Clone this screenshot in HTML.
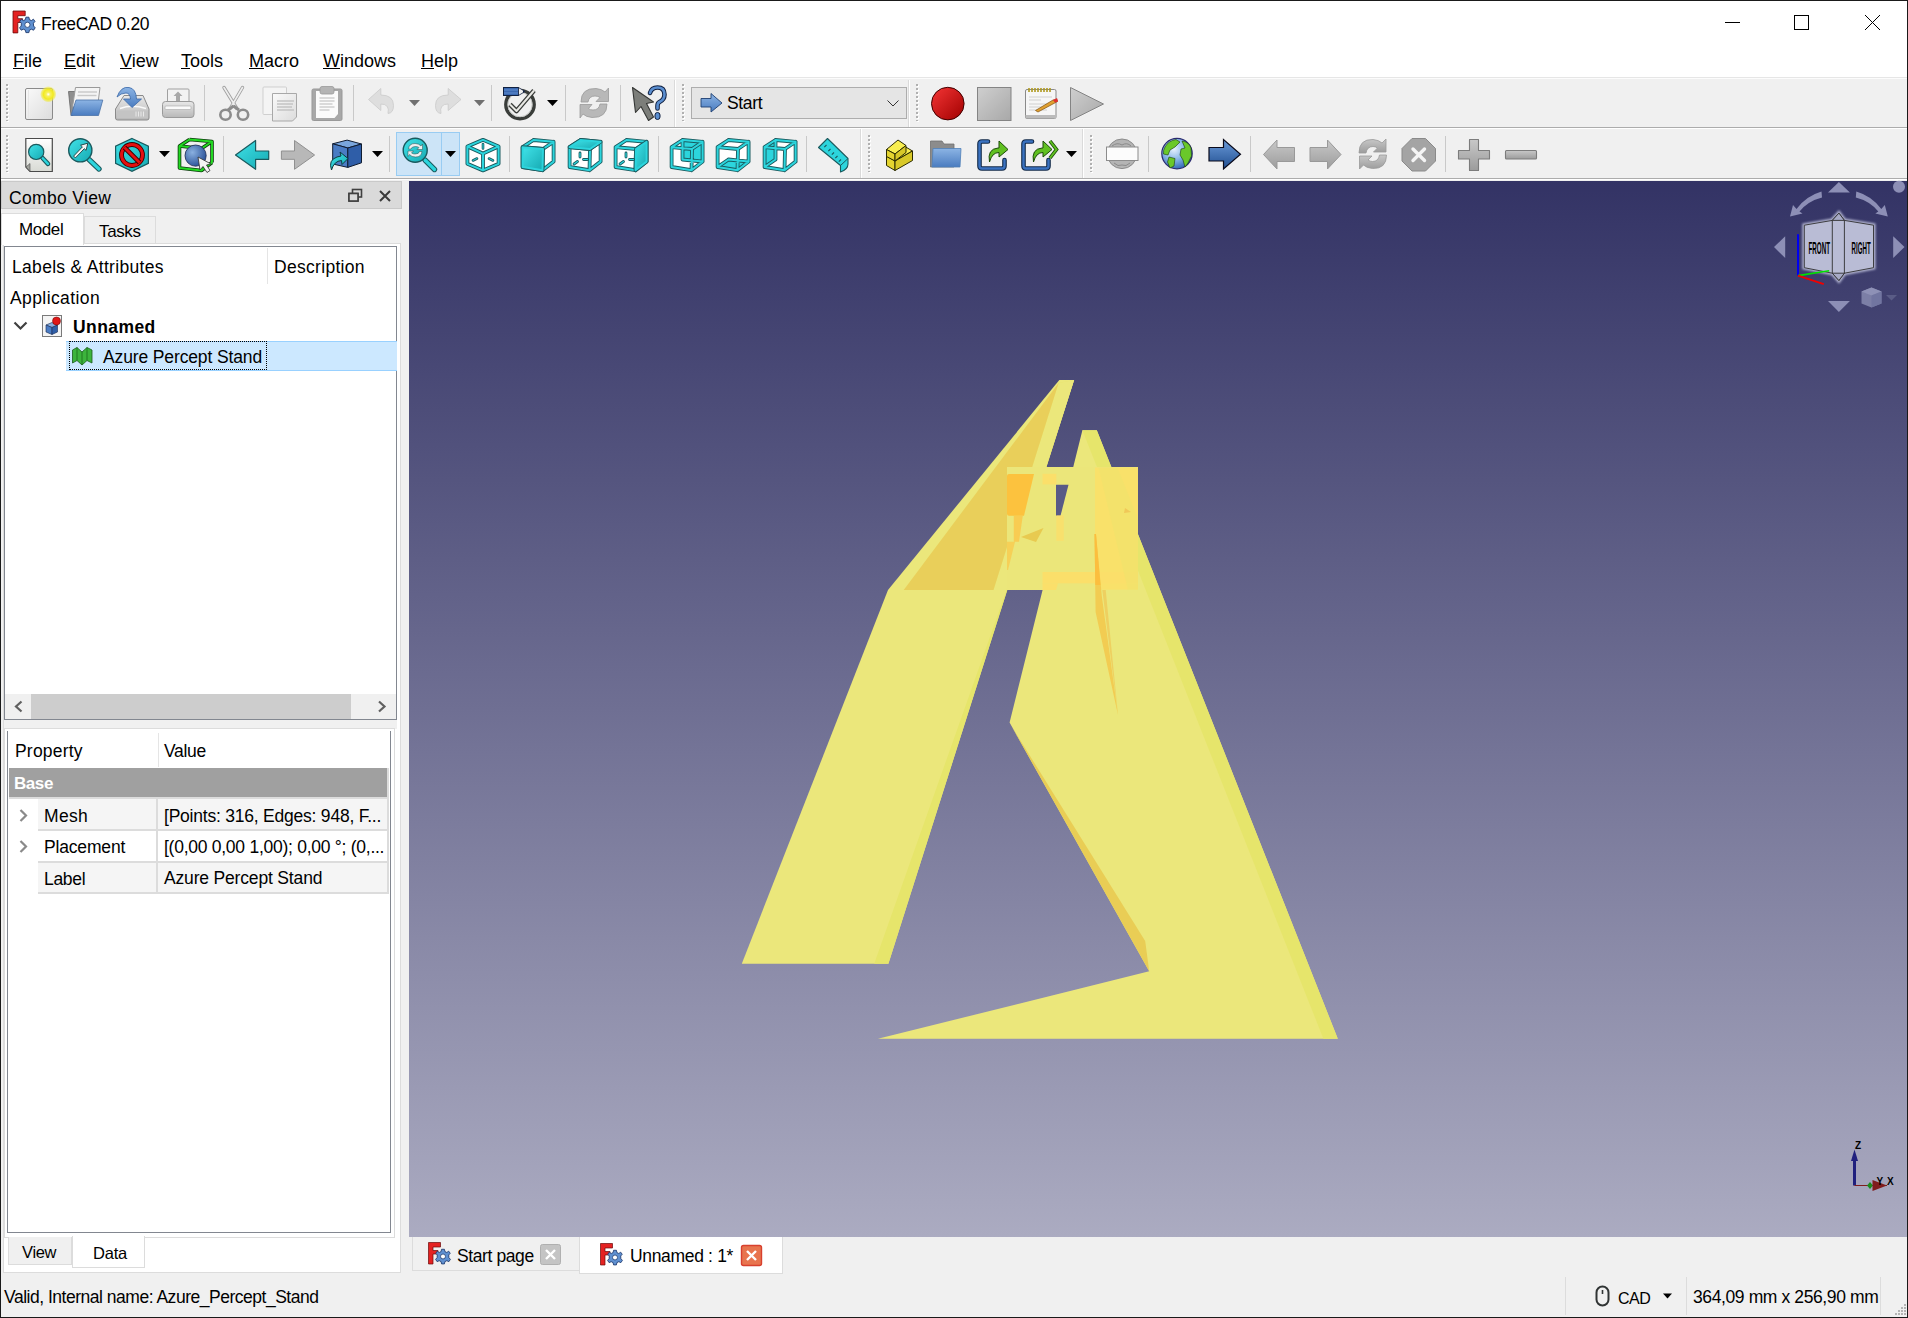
<!DOCTYPE html>
<html><head><meta charset="utf-8">
<style>
*{margin:0;padding:0;box-sizing:border-box}
html,body{width:1908px;height:1318px;overflow:hidden;background:#f0f0f0;font-family:"Liberation Sans",sans-serif;color:#000}
.a{position:absolute}
.t{position:absolute;white-space:nowrap;font-size:17.5px;line-height:20px}
svg{position:absolute;overflow:visible}
.grip{width:2px;background:repeating-linear-gradient(to bottom,#b0b0b0 0,#b0b0b0 2px,transparent 2px,transparent 4px);box-shadow:1px 1px 0 0 rgba(255,255,255,0)}
.gripw{width:2px;background:repeating-linear-gradient(to bottom,#fff 0,#fff 2px,transparent 2px,transparent 4px)}
.sep{width:1px;height:36px;background:#c9c9c9}
</style></head><body>
<!-- window border -->
<div class="a" style="left:0;top:0;width:1908px;height:1318px;background:#f0f0f0"></div>
<!-- title bar -->
<div class="a" style="left:0;top:0;width:1908px;height:77px;background:#fff"></div>
<div class="t" style="left:41px;top:14px;font-size:17.5px;letter-spacing:-0.3px">FreeCAD 0.20</div>
<!-- menu -->
<div class="a" style="left:1px;top:77px;width:1906px;height:1px;background:#e6e6e6"></div>
<div class="a" style="left:1px;top:78px;width:1906px;height:1px;background:#fcfcfc"></div>
<div class="t" style="left:13px;top:51px;font-size:18px"><u>F</u>ile</div>
<div class="t" style="left:64px;top:51px;font-size:18px"><u>E</u>dit</div>
<div class="t" style="left:120px;top:51px;font-size:18px"><u>V</u>iew</div>
<div class="t" style="left:181px;top:51px;font-size:18px"><u>T</u>ools</div>
<div class="t" style="left:249px;top:51px;font-size:18px"><u>M</u>acro</div>
<div class="t" style="left:323px;top:51px;font-size:18px"><u>W</u>indows</div>
<div class="t" style="left:421px;top:51px;font-size:18px"><u>H</u>elp</div>
<!-- toolbar rows -->
<div class="a" style="left:1px;top:79px;width:1906px;height:48px;background:#f0f0f0"></div>
<div class="a" style="left:1px;top:127px;width:1906px;height:1px;background:#acacac"></div>
<div class="a" style="left:1px;top:128px;width:1906px;height:1px;background:#fff"></div>
<div class="a" style="left:1px;top:178px;width:1906px;height:1px;background:#acacac"></div>
<div class="a" style="left:1px;top:179px;width:1906px;height:1px;background:#fff"></div>

<!-- grips -->
<div class="a gripw" style="left:7px;top:85px;height:37px"></div>
<div class="a grip" style="left:6px;top:84px;height:37px"></div>
<div class="a gripw" style="left:683px;top:85px;height:37px"></div>
<div class="a grip" style="left:682px;top:84px;height:37px"></div>
<div class="a gripw" style="left:917px;top:85px;height:37px"></div>
<div class="a grip" style="left:916px;top:84px;height:37px"></div>
<div class="a gripw" style="left:7px;top:136px;height:37px"></div>
<div class="a grip" style="left:6px;top:135px;height:37px"></div>
<div class="a gripw" style="left:869px;top:136px;height:37px"></div>
<div class="a grip" style="left:868px;top:135px;height:37px"></div>
<div class="a gripw" style="left:1091px;top:136px;height:37px"></div>
<div class="a grip" style="left:1090px;top:135px;height:37px"></div>
<!-- toolbar end lines -->
<div class="a" style="left:674px;top:80px;width:1px;height:47px;background:#dadada"></div>
<div class="a" style="left:675px;top:80px;width:1px;height:47px;background:#fff"></div>
<div class="a" style="left:908px;top:80px;width:1px;height:47px;background:#dadada"></div>
<div class="a" style="left:909px;top:80px;width:1px;height:47px;background:#fff"></div>
<div class="a" style="left:860px;top:129px;width:1px;height:49px;background:#dadada"></div>
<div class="a" style="left:861px;top:129px;width:1px;height:49px;background:#fff"></div>
<div class="a" style="left:1082px;top:129px;width:1px;height:49px;background:#dadada"></div>
<div class="a" style="left:1083px;top:129px;width:1px;height:49px;background:#fff"></div>
<!-- separators row1 -->
<div class="a sep" style="left:204px;top:85px"></div>
<div class="a sep" style="left:353px;top:85px"></div>
<div class="a sep" style="left:491px;top:85px"></div>
<div class="a sep" style="left:565px;top:85px"></div>
<div class="a sep" style="left:620px;top:85px"></div>
<!-- separators row2 -->
<div class="a sep" style="left:223px;top:136px"></div>
<div class="a sep" style="left:389px;top:136px"></div>
<div class="a sep" style="left:509px;top:136px"></div>
<div class="a sep" style="left:658px;top:136px"></div>
<div class="a sep" style="left:806px;top:136px"></div>
<div class="a sep" style="left:1148px;top:136px"></div>
<div class="a sep" style="left:1250px;top:136px"></div>
<div class="a sep" style="left:1445px;top:136px"></div>

<svg width="1908" height="180" style="left:0;top:0">
<defs>
<linearGradient id="gpage" x1="0" y1="0" x2="1" y2="1"><stop offset="0" stop-color="#fafafa"/><stop offset="1" stop-color="#dcdcdc"/></linearGradient>
<radialGradient id="gglow"><stop offset="0" stop-color="#fff"/><stop offset="0.25" stop-color="#f8f060"/><stop offset="0.6" stop-color="#f2ea20"/><stop offset="0.85" stop-color="#f0ea40" stop-opacity="0.6"/><stop offset="1" stop-color="#f0ea40" stop-opacity="0"/></radialGradient>
<linearGradient id="gblue" x1="0" y1="0" x2="0" y2="1"><stop offset="0" stop-color="#8cb4e4"/><stop offset="1" stop-color="#4a7cc0"/></linearGradient>
<linearGradient id="ggray" x1="0" y1="0" x2="0" y2="1"><stop offset="0" stop-color="#e8e8e8"/><stop offset="1" stop-color="#b8b8b8"/></linearGradient>
<linearGradient id="gred" x1="0" y1="0" x2="1" y2="1"><stop offset="0" stop-color="#f53535"/><stop offset="1" stop-color="#a00000"/></linearGradient>
<linearGradient id="gstop" x1="0" y1="0" x2="1" y2="1"><stop offset="0" stop-color="#cfcfcf"/><stop offset="1" stop-color="#a8a8a8"/></linearGradient>
</defs>
<!-- New -->
<rect x="25.5" y="88.5" width="27" height="31" rx="1.5" fill="url(#gpage)" stroke="#8a8a8a" stroke-width="1"/>
<line x1="28.5" y1="90" x2="28.5" y2="118" stroke="#e6e6e6"/>
<circle cx="48.3" cy="94.3" r="8.2" fill="url(#gglow)"/>
<!-- Open -->
<path d="M68.5 91.5 L76 91.5 L73 115.5 L71 115.5 Z" fill="#8f8f8f" stroke="#666" stroke-width="0.8"/>
<path d="M75.5 87.5 L100 87.5 L97.5 107 L72.5 107 Z" fill="#f4f4f4" stroke="#9a9a9a" stroke-width="1"/>
<line x1="78" y1="92" x2="97" y2="92" stroke="#c8c8c8" stroke-width="1.4"/>
<line x1="77.5" y1="95.5" x2="96.5" y2="95.5" stroke="#c8c8c8" stroke-width="1.4"/>
<path d="M76 100 L102.8 100 L98.5 115.5 L71 115.5 Z" fill="url(#gblue)" stroke="#4a72a8" stroke-width="0.8"/>
<!-- Save -->
<path d="M124 95.5 L143 95.5 L149 109 L149 118 Q149 120 147 120 L117.5 120 Q115.5 120 115.5 118 L115.5 109 Z" fill="url(#ggray)" stroke="#8a8a8a" stroke-width="1"/>
<path d="M120 108.5 Q132 104 146 108.5" fill="none" stroke="#fafafa" stroke-width="1.5"/>
<rect x="117" y="110.5" width="31" height="7.5" fill="#c4c4c4"/>
<path d="M136 111.5 v5 M138.5 111.5 v5 M141 111.5 v5 M143.5 111.5 v5" stroke="#e8e8e8" stroke-width="1"/>
<path d="M117 97 Q121 86 129 87.5 Q136 88.5 136.5 99 L141.5 99 L132 107.5 L123.5 99 L130.5 99 Q130 93 126 93 Q121 93 117 97 Z" fill="url(#gblue)" stroke="#3a68a8" stroke-width="0.8"/>
<!-- Print -->
<rect x="167.5" y="89" width="21.5" height="15" rx="1" fill="#f2f2f2" stroke="#a0a0a0" stroke-width="1"/>
<path d="M178 91.5 L182.5 96 L180 96 L180 101 L176 101 L176 96 L173.5 96 Z" fill="#a8a8a8"/>
<rect x="162.5" y="101.5" width="31.5" height="16" rx="3" fill="url(#ggray)" stroke="#9a9a9a" stroke-width="1"/>
<rect x="165" y="106" width="26" height="3.5" rx="1" fill="#fafafa" stroke="#a8a8a8" stroke-width="0.6"/>
<!-- Cut -->
<path d="M224 87.5 L236.5 108 M242.5 87.5 L230.5 108" stroke="#a0a0a0" stroke-width="3.4" stroke-linecap="round"/>
<path d="M224 87.5 L236.5 108 M242.5 87.5 L230.5 108" stroke="#eeeeee" stroke-width="1.6" stroke-linecap="round"/>
<path d="M233.5 106 L228 110" stroke="#8c8c8c" stroke-width="3"/>
<path d="M233.5 106 L239 110" stroke="#8c8c8c" stroke-width="3"/>
<ellipse cx="225.5" cy="114.8" rx="5.2" ry="5" fill="none" stroke="#8c8c8c" stroke-width="2.6"/>
<ellipse cx="243" cy="114.8" rx="5.2" ry="5" fill="none" stroke="#8c8c8c" stroke-width="2.6"/>
<!-- Copy -->
<rect x="263" y="87" width="23.5" height="27.5" rx="1" fill="#f4f4f4" stroke="#cfcfcf" stroke-width="1"/>
<path d="M272.5 93.5 L296.5 93.5 L296.5 117 L292.5 121 L272.5 121 Z" fill="url(#gpage)" stroke="#a8a8a8" stroke-width="1"/>
<path d="M277 101 h17 M277 104 h16 M277 107 h15 M277 110 h17" stroke="#c4c4c4" stroke-width="1.3"/>
<!-- Paste -->
<rect x="312" y="89" width="30" height="31.5" rx="1.5" fill="#a8a8a8" stroke="#999" stroke-width="1"/>
<path d="M316 91 L338 91 L338 114 L334.5 118 L316 118 Z" fill="#fbfbfb"/>
<rect x="320" y="86.5" width="14" height="7.5" rx="2" fill="#b4b4b4" stroke="#999" stroke-width="0.8"/>
<path d="M319.5 98 h15 M319.5 101 h15 M319.5 104 h13 M319.5 107 h15 M319.5 110 h10" stroke="#d0d0d0" stroke-width="1.3"/>
<!-- Undo -->
<path d="M368.5 99.5 L380.8 88.5 L380.8 95 Q393.5 95 393.5 105.5 Q393.5 113 388 113.5 Q390 104 380.8 104 L380.8 110.5 Z" fill="#dedede" stroke="#cacaca" stroke-width="0.8"/>
<path d="M409 100 L420 100 L414.5 106 Z" fill="#707070"/>
<!-- Redo -->
<path d="M461 99.5 L448.2 88.5 L448.2 95 Q435.5 95 435.5 105.5 Q435.5 113 441 113.5 Q439 104 448.2 104 L448.2 110.5 Z" fill="#dedede" stroke="#cacaca" stroke-width="0.8"/>
<path d="M474 100 L485 100 L479.5 106 Z" fill="#707070"/>
<!-- Workbench check -->
<circle cx="520" cy="104.6" r="14.2" fill="none" stroke="#3a3d3a" stroke-width="3.4"/>
<circle cx="520" cy="104.6" r="12.2" fill="none" stroke="#b8bab6" stroke-width="0.8"/>
<path d="M510 104.5 L516.5 111 L534 90.5" fill="none" stroke="#3a3d3a" stroke-width="4.6" stroke-linejoin="round"/>
<path d="M510 104.5 L516.5 111 L534 90.5" fill="none" stroke="#e8e8e4" stroke-width="2" stroke-linejoin="round"/>
<rect x="503.5" y="87.5" width="15" height="8" fill="#3a68b0" stroke="#102040" stroke-width="1"/>
<path d="M518.5 87.5 L525 91.5 L518.5 95.5 Z" fill="#f0f0f0" stroke="#102040" stroke-width="0.8"/>
<path d="M523 90.3 L525 91.5 L523 92.7 Z" fill="#102040"/>
<path d="M504 90 h14 M504 93 h14" stroke="#6a98d8" stroke-width="0.8"/>
<path d="M547 100 L558 100 L552.5 106 Z" fill="#000"/>
<!-- Refresh -->
<path d="M581 102 Q581 88 596 88.5 Q602 89 605 92 L608.5 88 L608.5 101.5 L596 101.5 L600 97.5 Q598 96 595 96 Q589 96 588 102 Z" fill="#b8b8b8" stroke="#9a9a9a" stroke-width="0.8"/>
<path d="M607 104 Q607 118 592 117.5 Q586 117 583 114 L580 118 L580 104.5 L592 104.5 L588.5 108.5 Q590 110 593 110 Q599 110 600 104 Z" fill="#b8b8b8" stroke="#9a9a9a" stroke-width="0.8"/>
<!-- Whats this -->
<path d="M632.5 87.5 L635.5 112.5 L641 106.5 L648.5 120.5 L653.5 117 L646.5 103.5 L653.5 102 Z" fill="#7c7e7a" stroke="#343634" stroke-width="1.1" stroke-linejoin="round"/>
<path d="M650 93 Q651.5 87.5 657.5 87.5 Q664.5 87.5 664.5 94.5 Q664.5 99.5 659.5 102 Q657.5 103 657.5 106 L657.5 108.5" fill="none" stroke="#102040" stroke-width="4.6" stroke-linecap="round"/>
<path d="M650 93 Q651.5 87.5 657.5 87.5 Q664.5 87.5 664.5 94.5 Q664.5 99.5 659.5 102 Q657.5 103 657.5 106 L657.5 108.5" fill="none" stroke="#5a8ed0" stroke-width="2.6" stroke-linecap="round"/>
<rect x="655" y="112.5" width="5" height="7" rx="2.5" fill="#5a8ed0" stroke="#102040" stroke-width="1"/>
<!-- combo -->
<rect x="691.5" y="87.5" width="215" height="31" fill="#e5e5e5" stroke="#adadad" stroke-width="1"/>
<path d="M701 98.5 L711 98.5 L711 93.5 L722 103 L711 112 L711 107 L701 107 Z" fill="url(#gblue)" stroke="#1e3e70" stroke-width="0.9"/>
<path d="M887.5 100.5 L893 106 L898.5 100.5" fill="none" stroke="#333" stroke-width="1"/>
<!-- record -->
<circle cx="947.8" cy="103.6" r="16.3" fill="url(#gred)" stroke="#400000" stroke-width="1"/>
<!-- stop -->
<rect x="977.5" y="87.5" width="33.5" height="33" fill="url(#gstop)" stroke="#848484" stroke-width="1"/>
<!-- macro editor -->
<rect x="1025.5" y="89.5" width="30.5" height="29" rx="1.5" fill="#f6f6f6" stroke="#8a8a8a" stroke-width="1"/>
<rect x="1025.5" y="115" width="30.5" height="3.5" fill="#bcbcbc"/>
<path d="M1029 88 v4 M1032 88 v4 M1035 88 v4 M1038 88 v4 M1041 88 v4 M1044 88 v4 M1047 88 v4 M1050 88 v4" stroke="#b09a20" stroke-width="1.6"/>
<path d="M1029 97 h23 M1029 100 h12 M1029 104 h20 M1029 107 h16 M1029 110 h18" stroke="#c8c8c8" stroke-width="0.8"/>
<path d="M1035.5 110.5 L1053 100 L1057 99.5 L1057.5 101.5 L1038 112 Z" fill="#e0a030" stroke="#805010" stroke-width="0.7"/>
<path d="M1053 100 L1057 98 L1058 101.5 L1055 102.5 Z" fill="#e03030"/>
<!-- play -->
<path d="M1070.5 87.5 L1103.5 104 L1070.5 120.5 Z" fill="url(#gstop)" stroke="#848484" stroke-width="1"/>
</svg>
<div class="t" style="left:727px;top:93px;font-size:17.5px;letter-spacing:-0.35px">Start</div>

<!-- R2S -->
<svg width="1908" height="180" style="left:0;top:0">
<defs>
<linearGradient id="gcy" x1="0" y1="0" x2="1" y2="1"><stop offset="0" stop-color="#40e2e8"/><stop offset="1" stop-color="#16aab2"/></linearGradient>
<linearGradient id="gpg2" x1="0" y1="0" x2="0" y2="1"><stop offset="0" stop-color="#fff"/><stop offset="1" stop-color="#d8dad4"/></linearGradient>
<radialGradient id="gsph" cx="0.35" cy="0.35" r="0.7"><stop offset="0" stop-color="#8ab0e0"/><stop offset="1" stop-color="#2a5298"/></radialGradient>
<linearGradient id="gcube" x1="0" y1="0" x2="1" y2="1"><stop offset="0" stop-color="#5a8ad0"/><stop offset="1" stop-color="#2a5aa0"/></linearGradient>
<radialGradient id="gglobe" cx="0.4" cy="0.35" r="0.7"><stop offset="0" stop-color="#e8f2ff"/><stop offset="0.5" stop-color="#8ab8e8"/><stop offset="1" stop-color="#2a62b0"/></radialGradient>
<linearGradient id="gbl2" x1="0" y1="0" x2="0" y2="1"><stop offset="0" stop-color="#6a9ad8"/><stop offset="1" stop-color="#204e90"/></linearGradient>
<linearGradient id="ggr2" x1="0" y1="0" x2="0" y2="1"><stop offset="0" stop-color="#c8c8c8"/><stop offset="1" stop-color="#9c9c9c"/></linearGradient>
</defs>
<path d="M25.8 138.5 L52.3 138.5 L52.3 171.5 L30 171.5 L25.8 167 Z" fill="url(#gpg2)" stroke="#4a4a4a" stroke-width="1.2"/>
<path d="M26 167 L30 163.5 L30 171.5 Z" fill="#a0a29c" stroke="#4a4a4a" stroke-width="0.6"/>
<line x1="42.5" y1="158" x2="48" y2="163.8" stroke="#1a5a5e" stroke-width="4.6" stroke-linecap="round"/>
<line x1="42.5" y1="158" x2="48" y2="163.8" stroke="#2cd5dd" stroke-width="2.4" stroke-linecap="round"/>
<circle cx="36.2" cy="151.9" r="7.6" fill="url(#gcy)" stroke="#1a5a5e" stroke-width="1.2"/>
<line x1="89" y1="159.5" x2="99" y2="169" stroke="#1a5a5e" stroke-width="5.4" stroke-linecap="round"/>
<line x1="89" y1="159.5" x2="99" y2="169" stroke="#2cd5dd" stroke-width="3.2" stroke-linecap="round"/>
<circle cx="80.3" cy="150.3" r="11.6" fill="url(#gcy)" stroke="#1a5a5e" stroke-width="1.4"/>
<polygon points="73.6,156.1 82.4,146.9 80.6,145.2 87.8,143.2 86.1,150.4 84.3,148.7 75.4,157.9" fill="#f4f4f4" stroke="#1a3a3a" stroke-width="0.9" stroke-linejoin="round"/>
<polygon points="132,138.5 148.4,146.2 148.4,163.4 132,171.3 115.6,163.4 115.6,146.2" fill="url(#gcy)" stroke="#1a5a5e" stroke-width="1.2"/>
<circle cx="132" cy="155" r="10.5" fill="none" stroke="#3a0000" stroke-width="4.8"/>
<circle cx="132" cy="155" r="10.5" fill="none" stroke="#e41010" stroke-width="3"/>
<line x1="124.5" y1="147.5" x2="139.5" y2="162.5" stroke="#3a0000" stroke-width="4.6"/>
<line x1="124.5" y1="147.5" x2="139.5" y2="162.5" stroke="#e41010" stroke-width="2.8"/>
<path d="M159 151 L170 151 L164.5 157 Z" fill="#000"/>
<path d="M179.5 146 L201.5 148.5 L201.5 170.5 L179.5 168 Z M189.5 139.5 L212 141.5 L212 162.5 M179.5 146 L189.5 139.5 M201.5 148.5 L212 141.5 M201.5 170.5 L212 162.5" fill="none" stroke="#0a3a0a" stroke-width="3.6" stroke-linejoin="round"/>
<path d="M179.5 146 L201.5 148.5 L201.5 170.5 L179.5 168 Z M189.5 139.5 L212 141.5 L212 162.5 M179.5 146 L189.5 139.5 M201.5 148.5 L212 141.5 M201.5 170.5 L212 162.5" fill="none" stroke="#22d822" stroke-width="2" stroke-linejoin="round"/>
<circle cx="195.6" cy="155.6" r="10.6" fill="url(#gsph)" stroke="#1a2a50" stroke-width="0.8"/>
<path d="M198 157 L200 170 L203 166.5 L207 172.5 L210 170.5 L206.5 165 L211 164 Z" fill="#f4f4f4" stroke="#303030" stroke-width="0.8" stroke-linejoin="round"/>
<path d="M235.5 155 L255.6 140.5 L255.6 151 L268.7 151 L268.7 159.3 L255.6 159.3 L255.6 169.3 Z" fill="url(#gcy)" stroke="#1a5a5e" stroke-width="1.2" stroke-linejoin="round"/>
<path d="M314.6 155 L294.5 140.5 L294.5 151 L281.4 151 L281.4 159.3 L294.5 159.3 L294.5 169.3 Z" fill="#b8b8b8" stroke="#909090" stroke-width="1" stroke-linejoin="round"/>
<polygon points="332.7,143.8 347.1,140.1 361.5,144 347.8,148" fill="#7aa6dc" stroke="#101c30" stroke-width="1"/>
<polygon points="332.7,143.8 347.8,148 347.8,167.4 332.7,164" fill="#4a7cc4" stroke="#101c30" stroke-width="1"/>
<polygon points="347.8,148 361.5,144 361.5,162.8 347.8,167.4" fill="#2f5ea8" stroke="#101c30" stroke-width="1"/>
<path d="M331.5 170 Q328 160 337 157 L341 156 L340 152 L348 158.5 L342 164.5 L341.5 160.5 Q334 161 331.5 170 Z" fill="url(#gcy)" stroke="#0e3a3e" stroke-width="1"/>
<path d="M372 151 L383 151 L377.5 157 Z" fill="#000"/>
<rect x="396.5" y="132.5" width="63" height="43" fill="#cce4f7" stroke="#99ccf2" stroke-width="1"/>
<line x1="441.5" y1="133" x2="441.5" y2="175" stroke="#99ccf2"/>
<line x1="425" y1="160" x2="434.5" y2="169.5" stroke="#1a5a5e" stroke-width="5.4" stroke-linecap="round"/>
<line x1="425" y1="160" x2="434.5" y2="169.5" stroke="#2cd5dd" stroke-width="3.2" stroke-linecap="round"/>
<circle cx="415.2" cy="150.3" r="12" fill="url(#gcy)" stroke="#1a5a5e" stroke-width="1.4"/>
<path d="M408.5 149 Q409 143.5 415 143.5 Q419 143.5 421 146 L422.5 144 L422.5 149.5 L417 149.5 L419 147.5 Q417.5 146.5 415.5 146.5 Q411.5 146.5 411 149 Z M422 151.5 Q421.5 157 415.5 157 Q411.5 157 409.5 154.5 L408 156.5 L408 151 L413.5 151 L411.5 153 Q413 154 415 154 Q419 154 419.5 151.5 Z" fill="#f0f0f0" stroke="#2a4a4a" stroke-width="0.5"/>
<path d="M445 151 L456 151 L450.5 157 Z" fill="#000"/>
<path d="M483.0 139.8 L498.6 146.4 L498.6 163.8 L483.0 170.4 L467.4 163.8 L467.4 146.4 Z M483 153.6 L467.4 146.4 M483 153.6 L498.6 146.4 M483 153.6 L483 170.4" stroke="#1a5a5e" stroke-width="3.8" stroke-linejoin="round" fill="#fff"/><path d="M483.0 139.8 L498.6 146.4 L498.6 163.8 L483.0 170.4 L467.4 163.8 L467.4 146.4 Z M483 153.6 L467.4 146.4 M483 153.6 L498.6 146.4 M483 153.6 L483 170.4" stroke="#2cd5dd" stroke-width="2" stroke-linejoin="round" fill="none"/><path d="M483 144 v4.5 M473 160.5 l4 -2 M493 160.5 l-4 -2" stroke="#1a5a5e" stroke-width="2.6" stroke-linecap="round"/><path d="M483 144 v4.5 M473 160.5 l4 -2 M493 160.5 l-4 -2" stroke="#2cd5dd" stroke-width="1" stroke-linecap="round"/>
<polygon points="522.6,147.2 533.5,140.0 553.6,141.8 553.6,161.6 542.5,170.2 522.6,167.0" fill="#fff"/>
<path d="M522.6 147.2 L543.0 149.0 M543.0 149.0 L542.5 170.2 M542.5 170.2 L522.6 167.0 M522.6 167.0 L522.6 147.2 M533.5 140.0 L553.6 141.8 M553.6 141.8 L553.6 161.6 M522.6 147.2 L533.5 140.0 M543.0 149.0 L553.6 141.8 M542.5 170.2 L553.6 161.6" stroke="#1a5a5e" stroke-width="3.8" stroke-linecap="round" fill="none"/>
<path d="M522.6 147.2 L543.0 149.0 M543.0 149.0 L542.5 170.2 M542.5 170.2 L522.6 167.0 M522.6 167.0 L522.6 147.2 M533.5 140.0 L553.6 141.8 M553.6 141.8 L553.6 161.6 M522.6 147.2 L533.5 140.0 M543.0 149.0 L553.6 141.8 M542.5 170.2 L553.6 161.6" stroke="#2cd5dd" stroke-width="2" stroke-linecap="round" fill="none"/>
<polygon points="522.6,147.2 543.0,149.0 542.5,170.2 522.6,167.0" fill="#1a5a5e" stroke="#1a5a5e" stroke-width="3.8" stroke-linejoin="round"/>
<polygon points="522.6,147.2 543.0,149.0 542.5,170.2 522.6,167.0" fill="url(#gcy)" stroke="#2cd5dd" stroke-width="2" stroke-linejoin="round"/>
<polygon points="569.6,147.2 580.5,140.0 600.6,141.8 600.6,161.6 589.5,170.2 569.6,167.0" fill="#fff"/>
<path d="M569.6 147.2 L590.0 149.0 M590.0 149.0 L589.5 170.2 M589.5 170.2 L569.6 167.0 M569.6 167.0 L569.6 147.2 M580.5 140.0 L600.6 141.8 M600.6 141.8 L600.6 161.6 M569.6 147.2 L580.5 140.0 M590.0 149.0 L600.6 141.8 M589.5 170.2 L600.6 161.6" stroke="#1a5a5e" stroke-width="3.8" stroke-linecap="round" fill="none"/>
<path d="M569.6 147.2 L590.0 149.0 M590.0 149.0 L589.5 170.2 M589.5 170.2 L569.6 167.0 M569.6 167.0 L569.6 147.2 M580.5 140.0 L600.6 141.8 M600.6 141.8 L600.6 161.6 M569.6 147.2 L580.5 140.0 M590.0 149.0 L600.6 141.8 M589.5 170.2 L600.6 161.6" stroke="#2cd5dd" stroke-width="2" stroke-linecap="round" fill="none"/>
<polygon points="569.6,147.2 580.5,140.0 600.6,141.8 590.0,149.0" fill="#1a5a5e" stroke="#1a5a5e" stroke-width="3.8" stroke-linejoin="round"/>
<polygon points="569.6,147.2 580.5,140.0 600.6,141.8 590.0,149.0" fill="url(#gcy)" stroke="#2cd5dd" stroke-width="2" stroke-linejoin="round"/>
<path d="M580 153 v4 M574 164 l3.5 -2.5 M583.5 159.5 h4" stroke="#1a5a5e" stroke-width="2.8" stroke-linecap="round"/><path d="M580 153 v4 M574 164 l3.5 -2.5 M583.5 159.5 h4" stroke="#2cd5dd" stroke-width="1.2" stroke-linecap="round"/>
<polygon points="615.6,147.2 626.5,140.0 646.6,141.8 646.6,161.6 635.5,170.2 615.6,167.0" fill="#fff"/>
<path d="M615.6 147.2 L636.0 149.0 M636.0 149.0 L635.5 170.2 M635.5 170.2 L615.6 167.0 M615.6 167.0 L615.6 147.2 M626.5 140.0 L646.6 141.8 M646.6 141.8 L646.6 161.6 M615.6 147.2 L626.5 140.0 M636.0 149.0 L646.6 141.8 M635.5 170.2 L646.6 161.6" stroke="#1a5a5e" stroke-width="3.8" stroke-linecap="round" fill="none"/>
<path d="M615.6 147.2 L636.0 149.0 M636.0 149.0 L635.5 170.2 M635.5 170.2 L615.6 167.0 M615.6 167.0 L615.6 147.2 M626.5 140.0 L646.6 141.8 M646.6 141.8 L646.6 161.6 M615.6 147.2 L626.5 140.0 M636.0 149.0 L646.6 141.8 M635.5 170.2 L646.6 161.6" stroke="#2cd5dd" stroke-width="2" stroke-linecap="round" fill="none"/>
<polygon points="636.0,149.0 646.6,141.8 646.6,161.6 635.5,170.2" fill="#1a5a5e" stroke="#1a5a5e" stroke-width="3.8" stroke-linejoin="round"/>
<polygon points="636.0,149.0 646.6,141.8 646.6,161.6 635.5,170.2" fill="url(#gcy)" stroke="#2cd5dd" stroke-width="2" stroke-linejoin="round"/>
<path d="M626 153 v4 M620 164 l3.5 -2.5 M629.5 159.5 h4" stroke="#1a5a5e" stroke-width="2.8" stroke-linecap="round"/><path d="M626 153 v4 M620 164 l3.5 -2.5 M629.5 159.5 h4" stroke="#2cd5dd" stroke-width="1.2" stroke-linecap="round"/>
<polygon points="671.6,147.2 682.5,140.0 702.6,141.8 702.6,161.6 691.5,170.2 671.6,167.0" fill="#fff"/>
<polygon points="682.5,140.0 702.6,141.8 702.6,161.6 682.5,159.5" fill="#2cd5dd" stroke="#1a5a5e" stroke-width="1"/>
<path d="M671.6 147.2 L692.0 149.0 M692.0 149.0 L691.5 170.2 M691.5 170.2 L671.6 167.0 M671.6 167.0 L671.6 147.2 M682.5 140.0 L702.6 141.8 M702.6 141.8 L702.6 161.6 M671.6 147.2 L682.5 140.0 M692.0 149.0 L702.6 141.8 M691.5 170.2 L702.6 161.6 M702.6 161.6 L682.5 159.5 M682.5 159.5 L682.5 140.0" stroke="#1a5a5e" stroke-width="3.8" stroke-linecap="round" fill="none"/>
<path d="M671.6 147.2 L692.0 149.0 M692.0 149.0 L691.5 170.2 M691.5 170.2 L671.6 167.0 M671.6 167.0 L671.6 147.2 M682.5 140.0 L702.6 141.8 M702.6 141.8 L702.6 161.6 M671.6 147.2 L682.5 140.0 M692.0 149.0 L702.6 141.8 M691.5 170.2 L702.6 161.6 M702.6 161.6 L682.5 159.5 M682.5 159.5 L682.5 140.0" stroke="#2cd5dd" stroke-width="2" stroke-linecap="round" fill="none"/>
<polygon points="717.6,147.2 728.5,140.0 748.6,141.8 748.6,161.6 737.5,170.2 717.6,167.0" fill="#fff"/>
<polygon points="717.6,167.0 737.5,170.2 748.6,161.6 728.5,159.5" fill="#2cd5dd" stroke="#1a5a5e" stroke-width="1"/>
<path d="M717.6 147.2 L738.0 149.0 M738.0 149.0 L737.5 170.2 M737.5 170.2 L717.6 167.0 M717.6 167.0 L717.6 147.2 M728.5 140.0 L748.6 141.8 M748.6 141.8 L748.6 161.6 M717.6 147.2 L728.5 140.0 M738.0 149.0 L748.6 141.8 M737.5 170.2 L748.6 161.6 M748.6 161.6 L728.5 159.5 M728.5 159.5 L717.6 167.0" stroke="#1a5a5e" stroke-width="3.8" stroke-linecap="round" fill="none"/>
<path d="M717.6 147.2 L738.0 149.0 M738.0 149.0 L737.5 170.2 M737.5 170.2 L717.6 167.0 M717.6 167.0 L717.6 147.2 M728.5 140.0 L748.6 141.8 M748.6 141.8 L748.6 161.6 M717.6 147.2 L728.5 140.0 M738.0 149.0 L748.6 141.8 M737.5 170.2 L748.6 161.6 M748.6 161.6 L728.5 159.5 M728.5 159.5 L717.6 167.0" stroke="#2cd5dd" stroke-width="2" stroke-linecap="round" fill="none"/>
<polygon points="764.6,147.2 775.5,140.0 795.6,141.8 795.6,161.6 784.5,170.2 764.6,167.0" fill="#fff"/>
<polygon points="764.6,147.2 775.5,140.0 775.5,159.5 764.6,167.0" fill="#2cd5dd" stroke="#1a5a5e" stroke-width="1"/>
<path d="M764.6 147.2 L785.0 149.0 M785.0 149.0 L784.5 170.2 M784.5 170.2 L764.6 167.0 M764.6 167.0 L764.6 147.2 M775.5 140.0 L795.6 141.8 M795.6 141.8 L795.6 161.6 M764.6 147.2 L775.5 140.0 M785.0 149.0 L795.6 141.8 M784.5 170.2 L795.6 161.6 M775.5 159.5 L775.5 140.0 M775.5 159.5 L764.6 167.0" stroke="#1a5a5e" stroke-width="3.8" stroke-linecap="round" fill="none"/>
<path d="M764.6 147.2 L785.0 149.0 M785.0 149.0 L784.5 170.2 M784.5 170.2 L764.6 167.0 M764.6 167.0 L764.6 147.2 M775.5 140.0 L795.6 141.8 M795.6 141.8 L795.6 161.6 M764.6 147.2 L775.5 140.0 M785.0 149.0 L795.6 141.8 M784.5 170.2 L795.6 161.6 M775.5 159.5 L775.5 140.0 M775.5 159.5 L764.6 167.0" stroke="#2cd5dd" stroke-width="2" stroke-linecap="round" fill="none"/>
<path d="M818.5 147.5 L827.5 138.5 L848 158.5 L848 164 Q848 169.5 840.5 172 L840.5 165.5 Z" fill="#2cd5dd" stroke="#1a5a5e" stroke-width="1.1" stroke-linejoin="round"/>
<path d="M840.5 165.5 L848 158.5" stroke="#1a5a5e" stroke-width="1"/>
<path d="M826.5 145 l-2.2 2.2 M830.5 149 l-2.2 2.2 M834 152.5 l-2.2 2.2 M837.5 156 l-2.2 2.2 M841 159.5 l-2.2 2.2" stroke="#1a5a5e" stroke-width="1.1"/>
<g stroke="#2a2a00" stroke-width="1" stroke-linejoin="round">
<polygon points="886.5,156 895,161 912.5,151 904,146" fill="#f8ee50"/>
<polygon points="886.5,156 895,161 895,170.5 886.5,165.5" fill="#e4d430"/>
<polygon points="895,161 912.5,151 912.5,160.5 895,170.5" fill="#d8c828"/>
<polygon points="886.5,149.5 895,154 906,145.5 898,140" fill="#f8ee50"/>
<polygon points="886.5,149.5 895,154 895,161 886.5,156.5" fill="#e4d430"/>
<polygon points="895,154 906,145.5 906,152.5 895,161" fill="#d8c828"/>
</g>
<path d="M930.5 141 L942 141 L944 144 L954 144 L954 167 L930.5 167 Z" fill="#8c8c8c" stroke="#707070" stroke-width="0.8"/>
<path d="M933 148.5 L961 148.5 L960 167 L932 167 Z" fill="url(#gblue)" stroke="#5080b8" stroke-width="0.8"/>
<path d="M988 141.5 L982 141.5 Q979.5 141.5 979.5 144 L979.5 166 Q979.5 168.5 982 168.5 L1002 168.5 Q1004.5 168.5 1004.5 166 L1004.5 160" fill="none" stroke="#102848" stroke-width="4.6" stroke-linecap="round"/>
<path d="M988 141.5 L982 141.5 Q979.5 141.5 979.5 144 L979.5 166 Q979.5 168.5 982 168.5 L1002 168.5 Q1004.5 168.5 1004.5 166 L1004.5 160" fill="none" stroke="#3a72c0" stroke-width="2.4" stroke-linecap="round"/>
<path d="M989.5 162 Q987 149 998 148 L999 148 L999 141 L1008 149.5 L999 157 L999 152.5 Q992 152.5 989.5 162 Z" fill="#60c020" stroke="#1a4a08" stroke-width="1"/>
<path d="M1032 141.5 L1026 141.5 Q1023.5 141.5 1023.5 144 L1023.5 166 Q1023.5 168.5 1026 168.5 L1046 168.5 Q1048.5 168.5 1048.5 166 L1048.5 160" fill="none" stroke="#102848" stroke-width="4.6" stroke-linecap="round"/>
<path d="M1032 141.5 L1026 141.5 Q1023.5 141.5 1023.5 144 L1023.5 166 Q1023.5 168.5 1026 168.5 L1046 168.5 Q1048.5 168.5 1048.5 166 L1048.5 160" fill="none" stroke="#3a72c0" stroke-width="2.4" stroke-linecap="round"/>
<path d="M1033.5 162 Q1031 149 1042 148 L1043 148 L1043 141 L1052 149.5 L1043 157 L1043 152.5 Q1036 152.5 1033.5 162 Z" fill="#60c020" stroke="#1a4a08" stroke-width="1"/>
<path d="M1050 141 L1056.5 149.5 L1050 158" fill="none" stroke="#1a4a08" stroke-width="3.6"/><path d="M1050 141 L1056.5 149.5 L1050 158" fill="none" stroke="#60c020" stroke-width="2"/>
<path d="M1066 151 L1077 151 L1071.5 157 Z" fill="#000"/>
<circle cx="1122" cy="153.8" r="14.8" fill="#b4b4b4" stroke="#8c8c8c" stroke-width="1"/>
<path d="M1112 146 q5 -4 10 -1 q5 -3 9 1 M1114 163 q4 4 8 2 q4 2 8 -2" stroke="#8a8a8a" stroke-width="1" fill="none"/>
<rect x="1106.5" y="147" width="31.5" height="13.5" fill="#fcfcfc" stroke="#8c8c8c" stroke-width="1"/>
<circle cx="1177" cy="153.6" r="15.2" fill="url(#gglobe)" stroke="#2a2a70" stroke-width="1.2"/>
<path d="M1165 147 Q1168 141 1176 139.5 L1180 142 L1175 147 L1170 150 L1168 155 L1163.5 154 Q1163 150 1165 147 Z" fill="#6ac82a" stroke="#1a3a08" stroke-width="0.6"/>
<path d="M1169 157 L1175 158.5 L1174 166 L1170 168 L1167.5 162 Z" fill="#6ac82a" stroke="#1a3a08" stroke-width="0.6"/>
<path d="M1182 141 Q1189 142 1191 148 L1191.5 156 L1188 163 L1185 167 L1183 160 L1180 155 L1181 149 L1185 148 Z" fill="#6ac82a" stroke="#1a3a08" stroke-width="0.6"/>
<path d="M1209 147.5 L1223.5 147.5 L1223.5 139.5 L1240.5 154.2 L1223.5 169 L1223.5 161 L1209 161 Z" fill="url(#gbl2)" stroke="#0a0a1a" stroke-width="1.2" stroke-linejoin="miter"/>
<path d="M1263.5 154.5 L1277 140 L1277 147.5 L1294.5 147.5 L1294.5 161.5 L1277 161.5 L1277 169 Z" fill="url(#ggr2)" stroke="#999" stroke-width="1"/>
<path d="M1341 154.5 L1327.5 140 L1327.5 147.5 L1310 147.5 L1310 161.5 L1327.5 161.5 L1327.5 169 Z" fill="url(#ggr2)" stroke="#999" stroke-width="1"/>
<path d="M1359 153 Q1359 139 1373 139.5 Q1379 140 1382 143 L1386 139 L1386 152 L1373.5 152 L1377.5 148 Q1375.5 146.5 1373 146.5 Q1367 146.5 1366 153 Z" fill="url(#ggr2)" stroke="#999" stroke-width="0.8"/>
<path d="M1386.5 155 Q1386.5 169 1372.5 168.5 Q1366.5 168 1363.5 165 L1359.5 169 L1359.5 156 L1372 156 L1368 160 Q1370 161.5 1372.5 161.5 Q1378.5 161.5 1379.5 155 Z" fill="url(#ggr2)" stroke="#999" stroke-width="0.8"/>
<polygon points="1412,138.5 1425.5,138.5 1435.5,148.5 1435.5,161 1425.5,171 1412,171 1402,161 1402,148.5" fill="#a4a4a4" stroke="#8a8a8a" stroke-width="1"/>
<path d="M1413 149 L1424.5 160.5 M1424.5 149 L1413 160.5" stroke="#f4f4f4" stroke-width="3.4" stroke-linecap="round"/>
<path d="M1469.5 139.5 L1478.5 139.5 L1478.5 150.5 L1489.5 150.5 L1489.5 159 L1478.5 159 L1478.5 170.5 L1469.5 170.5 L1469.5 159 L1458.5 159 L1458.5 150.5 L1469.5 150.5 Z" fill="url(#ggr2)" stroke="#7c7c7c" stroke-width="1.1" stroke-linejoin="round"/>
<rect x="1505.5" y="150.5" width="31" height="8.5" rx="1" fill="url(#ggr2)" stroke="#7c7c7c" stroke-width="1.1"/>
</svg>
<!-- R2E -->

<!-- PS -->
<!-- title icon & controls -->
<svg width="1908" height="45" style="left:0;top:0">
<path d="M13 11 L25.2 11 L25.2 15.7 L17.8 15.7 L17.8 18.7 L22.6 18.7 L22.6 22.5 L17.8 22.5 L17.8 32.9 L13 32.9 Z" fill="#e42222" stroke="#6a0a0a" stroke-width="0.8"/>
<g transform="translate(27.4 24.8)">
<path d="M-1.5 -7.6 L1.5 -7.6 L2 -5.2 L4 -4.2 L6 -5.6 L7.6 -3.4 L6 -1.6 L6.2 1.2 L7.8 3 L6.2 5.4 L4 4.4 L2 5.4 L1.5 7.8 L-1.5 7.8 L-2 5.4 L-4 4.4 L-6.2 5.4 L-7.8 3 L-6.2 1.2 L-6 -1.6 L-7.6 -3.4 L-6 -5.6 L-4 -4.2 L-2 -5.2 Z" fill="#5f90d0" stroke="#1e3a6e" stroke-width="0.9"/>
<circle r="2.6" fill="#fff" stroke="#1e3a6e" stroke-width="0.8"/>
</g>
<path d="M1725 22.5 L1740 22.5" stroke="#000" stroke-width="1"/>
<rect x="1794.5" y="15.5" width="14" height="14" fill="none" stroke="#000" stroke-width="1"/>
<path d="M1865 15 L1880 30 M1880 15 L1865 30" stroke="#000" stroke-width="1"/>
</svg>

<!-- combo view dock -->
<div class="a" style="left:1px;top:181px;width:401px;height:28px;background:#dadada;border:1px solid #c9c9c9"></div>
<div class="t" style="left:9px;top:188px;letter-spacing:0.33px">Combo View</div>
<svg width="410" height="215" style="left:0;top:0">
<rect x="349" y="193.5" width="9" height="7.5" fill="none" stroke="#404040" stroke-width="1.6"/>
<rect x="352.5" y="189.5" width="9" height="7.5" fill="none" stroke="#404040" stroke-width="1.6"/>
<rect x="349" y="193.5" width="9" height="7.5" fill="#dadada" stroke="#404040" stroke-width="1.6"/>
<path d="M380 191 L390 201 M390 191 L380 201" stroke="#3a3a3a" stroke-width="2"/>
</svg>
<!-- model pane -->
<div class="a" style="left:3px;top:243px;width:398px;height:1030px;background:#fff;border:1px solid #dcdcdc"></div>
<div class="a" style="left:1px;top:213px;width:83px;height:32px;background:#fff;border:1px solid #dcdcdc;border-bottom:none"></div>
<div class="a" style="left:84px;top:216px;width:72px;height:28px;background:#f0f0f0;border:1px solid #dcdcdc"></div>
<div class="t" style="left:19px;top:220px;font-size:17px;letter-spacing:-0.4px">Model</div>
<div class="t" style="left:99px;top:222px;font-size:17px;letter-spacing:-0.37px">Tasks</div>
<!-- tree box -->
<div class="a" style="left:4px;top:246px;width:393px;height:474px;background:#fff;border:1px solid #828790"></div>
<div class="t" style="left:12px;top:257px;letter-spacing:0.31px">Labels &amp; Attributes</div>
<div class="a" style="left:267px;top:248px;width:1px;height:36px;background:#e5e5e5"></div>
<div class="t" style="left:274px;top:257px;letter-spacing:0.3px">Description</div>
<div class="t" style="left:10px;top:288px;letter-spacing:0.4px">Application</div>
<svg width="410" height="380" style="left:0;top:0">
<path d="M14.5 322.5 L20.5 328.5 L26.5 322.5" fill="none" stroke="#404040" stroke-width="2.2"/>
<rect x="42.5" y="315.5" width="19" height="21" fill="#f4f4f4" stroke="#7a7a7a" stroke-width="1"/>
<polygon points="46,325 52,322.5 57.5,325 52,327.5" fill="#8ab0e0" stroke="#1a2a50" stroke-width="0.6"/>
<polygon points="46,325 52,327.5 52,334.5 46,332" fill="#4a7cc4" stroke="#1a2a50" stroke-width="0.6"/>
<polygon points="52,327.5 57.5,325 57.5,332 52,334.5" fill="#2f5ea8" stroke="#1a2a50" stroke-width="0.6"/>
<circle cx="56.5" cy="321" r="4" fill="#e01818" stroke="#600" stroke-width="0.5"/>
</svg>
<div class="t" style="left:73px;top:317px;font-weight:bold;letter-spacing:0.43px">Unnamed</div>
<div class="a" style="left:66px;top:341px;width:331px;height:30px;background:#cce8ff;border-top:1px solid #99d1ff;border-bottom:1px solid #99d1ff"></div>
<div class="a" style="left:69px;top:341px;width:198px;height:29px;border:1px dotted #000"></div>
<svg width="410" height="380" style="left:0;top:0">
<path d="M72.5 350 L77 347.5 L82 352 L87 347.5 L92 350 L92 363 L87 360.5 L82 365 L77 360.5 L72.5 363 Z" fill="#3cb43c" stroke="#1a5a1a" stroke-width="0.8"/>
<path d="M77 347.5 L77 360.5 M82 352 L82 365 M87 347.5 L87 360.5" stroke="#1a6a1a" stroke-width="0.8"/>
</svg>
<div class="t" style="left:103px;top:347px;letter-spacing:-0.13px">Azure Percept Stand</div>
<!-- h scrollbar -->
<div class="a" style="left:5px;top:694px;width:391px;height:25px;background:#f0f0f0"></div>
<div class="a" style="left:31px;top:694px;width:320px;height:25px;background:#cdcdcd"></div>
<svg width="410" height="730" style="left:0;top:0">
<path d="M21.5 701.5 L16 706.5 L21.5 711.5" fill="none" stroke="#606060" stroke-width="2.2"/>
<path d="M379 701.5 L384.5 706.5 L379 711.5" fill="none" stroke="#606060" stroke-width="2.2"/>
</svg>
<!-- splitter -->
<div class="a" style="left:4px;top:720px;width:393px;height:9px;background:#f0f0f0"></div>

<!-- property view -->
<div class="a" style="left:4px;top:728px;width:391px;height:510px;background:#fff;border:1px solid #dcdcdc"></div>
<div class="a" style="left:7px;top:731px;width:384px;height:502px;background:#fff;border:1px solid #828790;border-top:none"></div>
<div class="t" style="left:15px;top:741px;letter-spacing:0.2px">Property</div>
<div class="a" style="left:158px;top:733px;width:1px;height:34px;background:#e5e5e5"></div>
<div class="t" style="left:164px;top:741px;letter-spacing:-0.32px">Value</div>
<div class="a" style="left:9px;top:768px;width:378px;height:29px;background:#a0a0a0"></div>
<div class="a" style="left:387px;top:768px;width:2px;height:126px;background:#dcdcdc"></div>
<div class="t" style="left:14px;top:774px;color:#fff;font-weight:bold;font-size:17px;letter-spacing:-0.43px">Base</div>
<!-- rows -->
<div class="a" style="left:9px;top:797px;width:378px;height:2px;background:#dcdcdc"></div>
<div class="a" style="left:38px;top:799px;width:349px;height:31px;background:#f5f5f5"></div>
<div class="a" style="left:38px;top:829px;width:349px;height:2px;background:#dcdcdc"></div>
<div class="a" style="left:38px;top:861px;width:349px;height:2px;background:#dcdcdc"></div>
<div class="a" style="left:38px;top:863px;width:349px;height:29px;background:#f5f5f5"></div>
<div class="a" style="left:38px;top:892px;width:349px;height:2px;background:#dcdcdc"></div>
<div class="a" style="left:156px;top:799px;width:2px;height:93px;background:#dcdcdc"></div>
<svg width="410" height="900" style="left:0;top:0">
<path d="M20.5 810 L26 815.5 L20.5 821" fill="none" stroke="#8a8a8a" stroke-width="2.2"/>
<path d="M20.5 841 L26 846.5 L20.5 852" fill="none" stroke="#8a8a8a" stroke-width="2.2"/>
</svg>
<div class="t" style="left:44px;top:806px;letter-spacing:0.33px">Mesh</div>
<div class="t" style="left:164px;top:806px;letter-spacing:-0.22px">[Points: 316, Edges: 948, F...</div>
<div class="t" style="left:44px;top:837px;letter-spacing:-0.17px">Placement</div>
<div class="t" style="left:164px;top:837px;letter-spacing:-0.26px">[(0,00 0,00 1,00); 0,00 °; (0,...</div>
<div class="t" style="left:44px;top:869px;letter-spacing:-0.3px">Label</div>
<div class="t" style="left:164px;top:868px;letter-spacing:-0.17px">Azure Percept Stand</div>
<!-- view/data tabs -->
<div class="a" style="left:8px;top:1237px;width:64px;height:28px;background:#f0f0f0;border:1px solid #dcdcdc;border-top:none"></div>
<div class="a" style="left:72px;top:1236px;width:73px;height:32px;background:#fff;border:1px solid #dcdcdc;border-top:none"></div>
<div class="t" style="left:22px;top:1242px;font-size:16.5px;letter-spacing:-0.33px">View</div>
<div class="t" style="left:93px;top:1243px;font-size:16.5px;letter-spacing:-0.23px">Data</div>

<!-- doc tabs -->
<div class="a" style="left:412px;top:1237px;width:168px;height:34px;background:#f0f0f0;border:1px solid #dcdcdc;border-top:none"></div>
<div class="a" style="left:579px;top:1237px;width:204px;height:37px;background:#fff;border:1px solid #dcdcdc;border-top:none"></div>
<svg width="800" height="1280" style="left:0;top:0">
<g id="fcicon">
<path d="M428.5 1242.5 L440.5 1242.5 L440.5 1247 L433 1247 L433 1250.5 L438 1250.5 L438 1254 L433 1254 L433 1264 L428.5 1264 Z" fill="#e42222" stroke="#6a0a0a" stroke-width="0.7"/>
<g transform="translate(443 1256.5) scale(0.95)">
<path d="M-1.5 -7.6 L1.5 -7.6 L2 -5.2 L4 -4.2 L6 -5.6 L7.6 -3.4 L6 -1.6 L6.2 1.2 L7.8 3 L6.2 5.4 L4 4.4 L2 5.4 L1.5 7.8 L-1.5 7.8 L-2 5.4 L-4 4.4 L-6.2 5.4 L-7.8 3 L-6.2 1.2 L-6 -1.6 L-7.6 -3.4 L-6 -5.6 L-4 -4.2 L-2 -5.2 Z" fill="#5f90d0" stroke="#1e3a6e" stroke-width="0.9"/>
<circle r="2.6" fill="#fff" stroke="#1e3a6e" stroke-width="0.8"/>
</g>
</g>
<use href="#fcicon" x="172" y="1"/>
<rect x="540.5" y="1244.5" width="20" height="20" rx="2" fill="#c4c4c4" stroke="#b0b0b0" stroke-width="1"/>
<path d="M546 1250 L555 1259 M555 1250 L546 1259" stroke="#fff" stroke-width="2.4"/>
<rect x="741.5" y="1245.5" width="20" height="20" rx="2" fill="#e8744e" stroke="#d8402e" stroke-width="1.4"/>
<path d="M747 1251 L756 1260 M756 1251 L747 1260" stroke="#fff" stroke-width="2.4"/>
</svg>
<div class="t" style="left:457px;top:1246px;letter-spacing:-0.4px">Start page</div>
<div class="t" style="left:630px;top:1246px;letter-spacing:-0.33px">Unnamed : 1*</div>

<!-- status bar -->
<div class="t" style="left:4px;top:1287px;letter-spacing:-0.485px">Valid, Internal name: Azure_Percept_Stand</div>
<div class="t" style="left:1693px;top:1287px;letter-spacing:-0.39px">364,09 mm x 256,90 mm</div>
<div class="t" style="left:1618px;top:1289px;font-size:16px;letter-spacing:-0.5px">CAD</div>
<div class="a" style="left:1565px;top:1277px;width:1px;height:38px;background:#dcdcdc"></div>
<div class="a" style="left:1686px;top:1277px;width:1px;height:38px;background:#dcdcdc"></div>
<div class="a" style="left:1880px;top:1277px;width:1px;height:38px;background:#dcdcdc"></div>
<svg width="1908" height="1318" style="left:0;top:0">
<rect x="1596.5" y="1286.5" width="12" height="19" rx="6" fill="none" stroke="#303434" stroke-width="2"/>
<path d="M1602.5 1290 L1602.5 1294" stroke="#303434" stroke-width="1.6"/>
<path d="M1663 1293.5 L1672 1293.5 L1667.5 1298.5 Z" fill="#000"/>
<g fill="#b4b4b4"><rect x="1904" y="1304" width="2" height="2"/><rect x="1901" y="1307" width="2" height="2"/><rect x="1904" y="1307" width="2" height="2"/><rect x="1898" y="1310" width="2" height="2"/><rect x="1901" y="1310" width="2" height="2"/><rect x="1904" y="1310" width="2" height="2"/><rect x="1895" y="1313" width="2" height="2"/><rect x="1898" y="1313" width="2" height="2"/><rect x="1901" y="1313" width="2" height="2"/><rect x="1904" y="1313" width="2" height="2"/></g>
</svg>

<!-- PE -->
<!-- 3D view -->
<div class="a" style="left:409px;top:181px;width:1498px;height:1056px;background:linear-gradient(#333365,#ababc1)"></div>
<!-- V3S -->
<svg width="1908" height="1318" style="left:0;top:0">
<defs><clipPath id="vclip"><rect x="409" y="181" width="1498" height="1056"/></clipPath></defs>
<g clip-path="url(#vclip)">
<!-- right piece -->
<polygon points="1082.4,430.2 1096.8,430.2 1337.8,1038.8 877.9,1038.8 1149.2,971.3 1009.6,722.5" fill="#ebe77b"/>
<polygon points="1082.4,430.2 1096.8,430.2 1337.8,1038.8 1323.4,1038.8" fill="#e6e56b"/>
<polygon points="1012,727 1149.2,971.3 1145.2,941" fill="#e9cd55"/>
<polygon points="1095,532 1100,532 1118,715" fill="#eed060"/>
<!-- left piece -->
<polygon points="1059.3,380 1074.1,380 888.4,963.7 741.8,963.7 888,590" fill="#ebe77b"/>
<polygon points="1074.1,380 888.4,963.7 874.2,963.7 1006.6,590 993.5,590 1058.6,383" fill="#e6e56b"/>
<polygon points="1058.6,383 1074.1,380 1006.6,590 993.5,590" fill="#ebe77b"/>
<polygon points="1058.6,383 903.7,590 993.5,590" fill="#e9cf5a"/>
<!-- bracket -->
<rect x="1007" y="467" width="131" height="123" fill="#ebe67a"/>
<polygon points="1056,484.8 1068.5,484.8 1060.5,515.8 1056,515.8" fill="#585a86"/>
<path d="M1009 474 L1034 474 L1024 515.8 L1009 515.8 Q1007 515.8 1007 513.8 L1007 476 Q1007 474 1009 474 Z" fill="#fcc23e"/>
<polygon points="1013.8,515.8 1022.8,515.8 1019,541.8 1013.8,541.8" fill="#fbc648" opacity="0.8"/>
<polygon points="1007,541.8 1015,541.8 1008,570 1007,570" fill="#fbc648" opacity="0.7"/>
<rect x="1042.5" y="473.8" width="13.8" height="10.6" fill="#fbdf6a"/>
<polygon points="1056.3,515.3 1063.8,515.3 1063.8,540.8 1056.3,540.8" fill="#fbdf6a" opacity="0.8"/>
<rect x="1095" y="467.5" width="43" height="122.2" fill="#fbe068" opacity="0.9"/>
<rect x="1042.5" y="572" width="95.5" height="11.3" fill="#fbdf6a"/>
<polygon points="1042.5,583.3 1058,583.3 1056,590 1042.5,590" fill="#fbdf6a"/>
<polygon points="1021,537 1043.5,528 1036,542" fill="#e8ca50"/>
<polygon points="1098.5,467.5 1117.5,467.5 1138,519 1138,589.7 1128,589.7" fill="#e8e46c" opacity="0.35"/>
<polygon points="1125,508 1131,512 1124,513" fill="#f0c858"/>
<path d="M1094.5 534 L1096 534 L1101.8 596 L1118 715 L1095.6 612 Z" fill="#f2cc52"/>
<path d="M1094.5 534 L1096 534 L1100.5 585 L1095.3 585 Z" fill="#fcbe3e"/>
</g>
<!-- nav cube -->
<g fill="#8d8fb6">
<polygon points="1828,192.5 1849.9,192.5 1838.9,182.1"/>
<polygon points="1828,301.1 1849.9,301.1 1838.9,312"/>
<polygon points="1774,247.1 1785.2,236.2 1785.2,258"/>
<polygon points="1904.5,247.1 1893.2,236.2 1893.2,258"/>
<circle cx="1899" cy="186.8" r="6"/>
<path d="M1821.5 191.5 Q1806 196 1796.5 209 L1793 205 L1790 216.5 L1802.5 213.5 L1799.5 211.5 Q1808 201 1822 197.5 Z"/>
<path d="M1856.3 191.5 Q1871.8 196 1881.3 209 L1884.8 205 L1887.8 216.5 L1875.3 213.5 L1878.3 211.5 Q1869.8 201 1855.8 197.5 Z"/>
</g>
<polygon points="1861.5,291.5 1871.5,287.5 1881.5,291.5 1881.5,303.5 1871.5,307.5 1861.5,303.5" fill="#7c7fa6"/>
<polygon points="1861.5,291.5 1871.5,287.5 1881.5,291.5 1871.5,295.5" fill="#8e91b6"/>
<polygon points="1871.5,295.5 1881.5,291.5 1881.5,303.5 1871.5,307.5" fill="#7175a0"/>
<polygon points="1886,295 1897,295 1891.5,300.5" fill="#5a5c86"/>
<filter id="nblur" x="-20%" y="-20%" width="140%" height="140%"><feGaussianBlur stdDeviation="1.2"/></filter>
<polygon points="1804.3,225.2 1832.3,220.4 1838.9,213.1 1844.4,220.4 1873.5,225.2 1873.5,267.7 1844.4,273.2 1838.9,280.5 1832.3,273.2 1804.3,267.7" fill="none" stroke="#b4b6d2" stroke-width="4" filter="url(#nblur)"/>
<g stroke="#303030" stroke-width="0.9" stroke-linejoin="round">
<polygon points="1804.3,225.2 1832.3,220.4 1838.9,213.1 1844.4,220.4 1873.5,225.2 1873.5,267.7 1844.4,273.2 1838.9,280.5 1832.3,273.2 1804.3,267.7" fill="#b9bcd5"/>
<polygon points="1832.3,220.4 1838.9,213.1 1844.4,220.4" fill="#a7aac6"/>
<polygon points="1832.3,273.2 1838.9,280.5 1844.4,273.2" fill="#a7aac6"/>
<path d="M1832.3 220.4 L1832.3 273.2 M1844.4 220.4 L1844.4 273.2" fill="none"/>
</g>
<text transform="translate(1819.2 253.8) scale(0.52 1.33)" font-family="Liberation Sans" font-size="12" font-weight="bold" text-anchor="middle" fill="#000">FRONT</text>
<text transform="translate(1861.1 253.8) scale(0.51 1.33)" font-family="Liberation Sans" font-size="12" font-weight="bold" text-anchor="middle" fill="#000">RIGHT</text>
<path d="M1798 234.3 L1798 275.6" stroke="#0000f0" stroke-width="2"/>
<path d="M1798 275.6 L1829.2 270.8" stroke="#00e000" stroke-width="1.6"/>
<path d="M1798 275.6 L1823.8 284.1" stroke="#f00000" stroke-width="2"/>
<!-- bottom-right axis -->
<path d="M1854.5 1160 L1854.5 1185.5" stroke="#20207e" stroke-width="3"/>
<polygon points="1854.5,1149.5 1858,1161 1851,1161" fill="#20207e"/>
<path d="M1854.5 1185.5 L1887 1185.5" stroke="#801c1c" stroke-width="1.2"/>
<polygon points="1867,1185.5 1870,1182 1873,1185.5 1870,1189" fill="#1c8c1c"/>
<polygon points="1872.5,1180 1887,1185.5 1872.5,1191" fill="#801c1c"/>
<text x="1855" y="1148.5" font-family="Liberation Sans" font-size="10" font-weight="bold" fill="#000">Z</text>
<text x="1876.5" y="1185" font-family="Liberation Sans" font-size="10" font-weight="bold" fill="#000">Y</text>
<text x="1887" y="1185" font-family="Liberation Sans" font-size="10" font-weight="bold" fill="#000">X</text>
</svg>

<!-- V3E -->

<!-- frame border -->
<div class="a" style="left:0;top:0;width:1908px;height:1px;background:#1a1a1a"></div>
<div class="a" style="left:0;top:1317px;width:1908px;height:1px;background:#1a1a1a"></div>
<div class="a" style="left:0;top:0;width:1px;height:1318px;background:#1a1a1a"></div>
<div class="a" style="left:1907px;top:0;width:1px;height:1318px;background:#1a1a1a"></div>
</body></html>
